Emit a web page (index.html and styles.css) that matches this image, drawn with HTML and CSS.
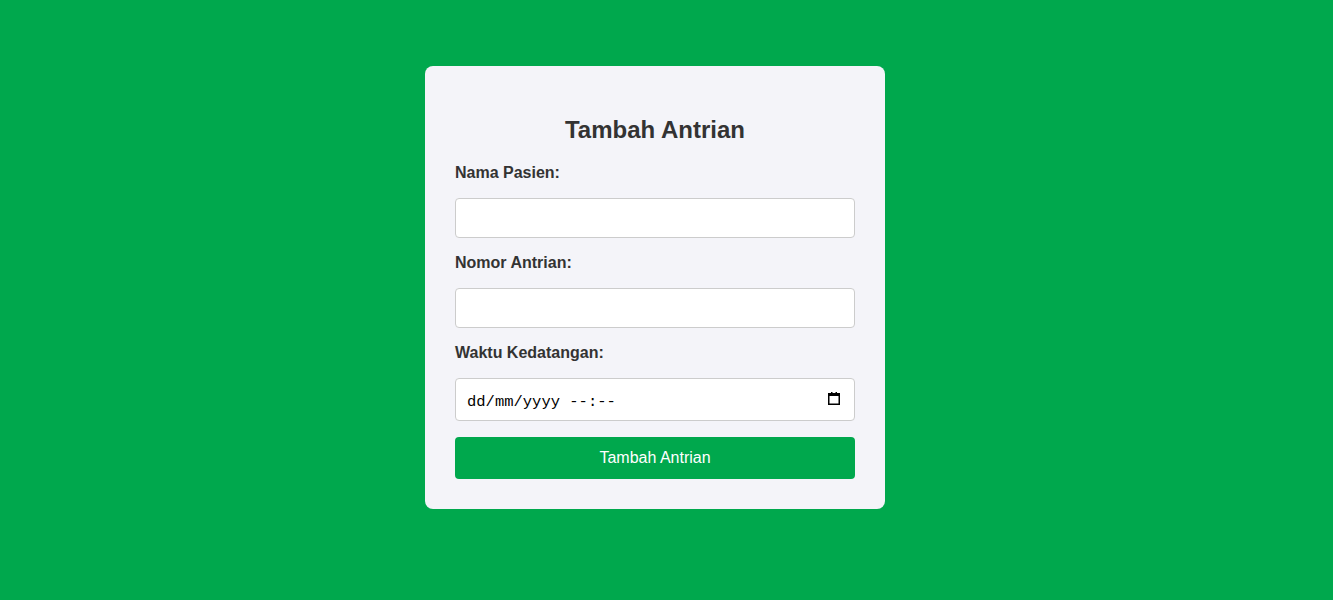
FILE: index.html
```html
<!DOCTYPE html>
<html lang="id">
<head>
<meta charset="utf-8">
<title>Tambah Antrian</title>
<link rel="stylesheet" href="styles.css">
</head>
<body>
<div class="card">
  <h2 class="title">Tambah Antrian</h2>
  <form class="form">
    <label class="label" for="nama">Nama Pasien:</label>
    <input class="field" type="text" id="nama">
    <label class="label" for="nomor">Nomor Antrian:</label>
    <input class="field" type="number" id="nomor">
    <label class="label" for="waktu">Waktu Kedatangan:</label>
    <div class="date-wrap">
      <input class="field field-date" type="text" id="waktu" placeholder="dd/mm/yyyy --:--">
      <svg class="cal-icon" width="12" height="13" viewBox="0 0 12 13" aria-hidden="true">
        <rect x="3" y="0" width="1.5" height="2" fill="#000"/>
        <rect x="7.5" y="0" width="1.5" height="2" fill="#000"/>
        <rect x="0.75" y="1.75" width="10.5" height="10.5" fill="none" stroke="#000" stroke-width="1.5"/>
        <rect x="0" y="1" width="12" height="3" fill="#000"/>
      </svg>
    </div>
    <button class="btn" type="button">Tambah Antrian</button>
  </form>
</div>
</body>
</html>
```

FILE: styles.css
```css
html, body {
  margin: 0;
  padding: 0;
}
body {
  background: #00a84d;
  font-family: "Liberation Sans", Arial, sans-serif;
  color: #333;
  display: flex;
  justify-content: center;
  padding: 66px 23px 0 0;
  min-height: 600px;
  box-sizing: border-box;
}
.card {
  width: 460px;
  box-sizing: border-box;
  background: #f4f4f9;
  border-radius: 8px;
  padding: 30px;
  align-self: flex-start;
}
.title {
  font-size: 24px;
  font-weight: bold;
  text-align: center;
  margin: 20px 0;
  line-height: 28px;
}
.form {
  display: flex;
  flex-direction: column;
}
.label {
  font-size: 16px;
  font-weight: bold;
  line-height: 18px;
  margin-bottom: 16px;
}
.field {
  width: 100%;
  box-sizing: border-box;
  padding: 10px;
  border: 1px solid #ccc;
  border-radius: 4px;
  font-size: 16px;
  line-height: 18px;
  height: 40px;
  background: #fff;
  margin: 0 0 16px 0;
  font-family: "Liberation Sans", Arial, sans-serif;
}
.date-wrap {
  position: relative;
}
.field-date {
  height: 43px;
  font-family: "Liberation Mono", "DejaVu Sans Mono", monospace;
  font-size: 15.5px;
  padding: 13px 40px 8px 11px;
  color: #000;
}
.field-date::placeholder {
  color: #000;
  opacity: 1;
}
.cal-icon {
  position: absolute;
  right: 15px;
  top: 14px;
  pointer-events: none;
}
.btn {
  width: 100%;
  height: 42px;
  border: none;
  border-radius: 4px;
  background: #00a84d;
  color: #fff;
  font-family: "Liberation Sans", Arial, sans-serif;
  font-size: 16px;
  cursor: pointer;
}
```
